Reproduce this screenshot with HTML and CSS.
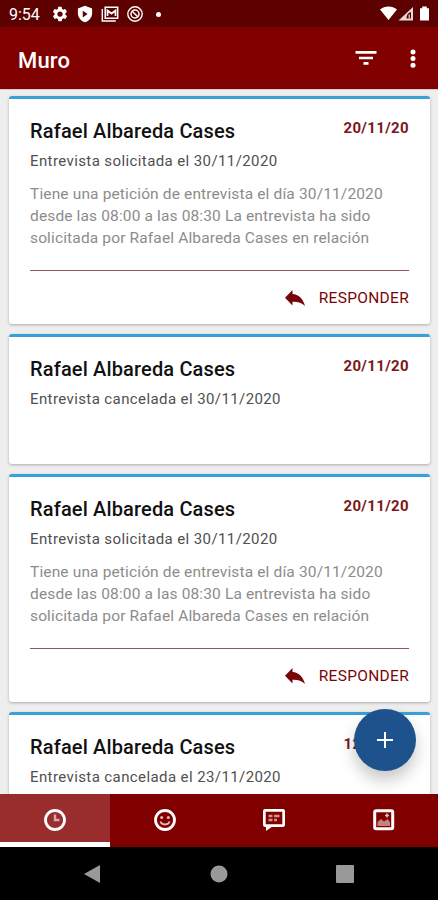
FILE: index.html
```html
<!DOCTYPE html>
<html lang="es">
<head>
  <meta charset="UTF-8" />
  <meta name="viewport" content="width=device-width, initial-scale=1.0"/>
  <title>Muro</title>
  <link rel="stylesheet" href="styles.css">
</head>
<body>
  <div class="status-bar">
    <span class="clock">9:54</span>
    <div class="status-left">
      <!-- settings -->
      <svg width="18" height="18" viewBox="0 0 24 24"><path fill="#fff" fill-rule="evenodd" d="M19.1 12.9a7 7 0 0 0 0-1.8l2-1.6c.2-.1.3-.4.1-.6l-1.900-3.300c-.1-.2-.4-.3-.6-.2l-2.400 1a7 7 0 0 0-1.600-1l-.4-2.500c0-.2-.2-.4-.5-.4h-3.800c-.3 0-.5.2-.5.4l-.4 2.500a7 7 0 0 0-1.600 1l-2.400-1c-.2-.1-.5 0-.6.2L2.700 8.900c-.1.2-.1.5.1.600l2 1.600a7 7 0 0 0 0 1.800l-2 1.600c-.2.1-.3.4-.1.600l1.900 3.300c.1.2.4.3.6.2l2.400-1c.5.4 1 .7 1.600 1l.4 2.500c0 .2.2.4.5.4h3.800c.3 0 .5-.2.5-.4l.4-2.500c.6-.3 1.100-.6 1.600-1l2.400 1c.2.1.5 0 .6-.2l1.900-3.300c.1-.2.1-.5-.1-.600zM12 15.500a3.500 3.500 0 1 1 0-7 3.500 3.500 0 0 1 0 7z"/></svg>
      <!-- shield -->
      <svg width="18" height="18" viewBox="0 0 24 24"><path fill="#fff" fill-rule="evenodd" d="M12 1 2.500 4.500V11c0 5.500 4 10.300 9.500 12 5.500-1.700 9.500-6.500 9.500-12V4.500zM9 7.500l6.500 4.500L9 16.500z"/></svg>
      <!-- mail -->
      <svg width="18" height="18" viewBox="0 0 18 18" fill="none" stroke="#fff"><path stroke-width="1.400" d="M1.300 4v12h13.500"/><path stroke-width="1.500" d="M4.200 2.300h12.500v10.900H4.200z"/><path stroke-width="1.800" d="M6.500 11V5.500l4 3 4-3V11"/></svg>
      <!-- do not disturb -->
      <svg width="18" height="18" viewBox="0 0 18 18" fill="none" stroke="#fff"><circle cx="9" cy="9" r="7.200" stroke-width="1.400"/><circle cx="9" cy="9" r="4" stroke-width="1.500"/><path stroke-width="1.500" d="m6 6 6 6"/></svg>
      <span class="dot"></span>
    </div>
    <div class="status-right">
      <svg width="50" height="16" viewBox="0 0 50 16"><path fill="#fff" d="M0 3.500C4.700-.6 12.300-.6 17 3.500L8.500 14zM49 2.300h-2.200V.5h-4.600v1.800H40v12.200h9z"/><path fill="#fff" fill-opacity=".85" d="M33 1v13.500H18.500z"/><path fill="#5c0000" d="M31 6v6.500h-4.500c0-3 1-5.500 4.500-6.500z"/><path fill="#fff" fill-opacity=".7" d="M28.500 8.500H30v4h-1.500z"/></svg>
    </div>
  </div>

  <header class="app-bar">
    <h1>Muro</h1>
    <svg class="filter" width="22" height="16" viewBox="0 0 22 16"><path fill="#fff" d="M.5 1h21v2.700H.5zM4 6.700h14v2.600H4zM8.500 12h5v2.700h-5z"/></svg>
    <svg class="more" width="6" height="20" viewBox="0 0 6 20" fill="#fff"><circle cx="3" cy="3" r="2.500"/><circle cx="3" cy="9.600" r="2.500"/><circle cx="3" cy="16.200" r="2.500"/></svg>
  </header>

  <main class="feed">
    <div class="card">
      <div class="card-head">
        <h2>Rafael Albareda Cases</h2>
        <span class="date">20/11/20</span>
      </div>
      <p class="subject">Entrevista solicitada el 30/11/2020</p>
      <p class="message">Tiene una petición de entrevista el día 30/11/2020<br>desde las 08:00 a las 08:30 La entrevista ha sido<br>solicitada por Rafael Albareda Cases en relación</p>
      <div class="card-actions">
        <svg width="20" height="16" viewBox="0 0 20 16"><path fill="#780507" d="M7.500 0v4c6 .5 10.500 4.200 12.500 12-3.500-3.500-7-4.500-12.500-4.300V15.500L0 7.700z"/></svg>
        <span class="reply">RESPONDER</span>
      </div>
    </div>

    <div class="card short">
      <div class="card-head">
        <h2>Rafael Albareda Cases</h2>
        <span class="date">20/11/20</span>
      </div>
      <p class="subject">Entrevista cancelada el 30/11/2020</p>
    </div>

    <div class="card">
      <div class="card-head">
        <h2>Rafael Albareda Cases</h2>
        <span class="date">20/11/20</span>
      </div>
      <p class="subject">Entrevista solicitada el 30/11/2020</p>
      <p class="message">Tiene una petición de entrevista el día 30/11/2020<br>desde las 08:00 a las 08:30 La entrevista ha sido<br>solicitada por Rafael Albareda Cases en relación</p>
      <div class="card-actions">
        <svg width="20" height="16" viewBox="0 0 20 16"><path fill="#780507" d="M7.500 0v4c6 .5 10.500 4.200 12.500 12-3.500-3.500-7-4.500-12.500-4.300V15.500L0 7.700z"/></svg>
        <span class="reply">RESPONDER</span>
      </div>
    </div>

    <div class="card short">
      <div class="card-head">
        <h2>Rafael Albareda Cases</h2>
        <span class="date">12/11/20</span>
      </div>
      <p class="subject">Entrevista cancelada el 23/11/2020</p>
    </div>

    <div class="fab">
      <svg width="16" height="16" viewBox="0 0 16 16"><path stroke="#fff" stroke-width="2" d="M8 0v16M0 8h16"/></svg>
    </div>
  </main>

  <nav class="tabs">
    <div class="tab active">
      <svg width="22" height="22" viewBox="0 0 22 22" fill="none"><circle cx="11" cy="11" r="9.500" stroke="#fff" stroke-width="2.800"/><path stroke="#d9a5a5" stroke-width="2.400" d="M11 5.500V11h4.500"/></svg>
    </div>
    <div class="tab">
      <svg width="22" height="22" viewBox="0 0 22 22" fill="none"><circle cx="11" cy="11" r="9.500" stroke="#fff" stroke-width="2.800"/><circle cx="7.700" cy="8.500" r="1.500" fill="#e5bcbc"/><circle cx="14.300" cy="8.500" r="1.500" fill="#e5bcbc"/><path stroke="#e5bcbc" stroke-width="1.800" d="M6.300 12.500c1.500 4 7.900 4 9.400 0"/></svg>
    </div>
    <div class="tab">
      <svg width="22" height="22" viewBox="0 0 22 22" fill="none"><path fill="#fff" d="M3 15v7l7-5z"/><rect x="1.300" y="1.300" width="19.400" height="15.400" rx="1.500" fill="#800000" stroke="#fff" stroke-width="2.800"/><path stroke="#d09090" stroke-width="2.600" d="M5.500 7h4M11 7h5.500M5.500 11h4M11 11h3"/></svg>
    </div>
    <div class="tab">
      <svg width="22" height="22" viewBox="0 0 22 22" fill="none"><rect x="1.700" y="1.700" width="18" height="18" rx="1.500" stroke="#fff" stroke-width="3"/><path fill="#c98080" d="M4.500 17v-4L8 10l3 2.500 3.500-2.500 2.500 3v4z"/><path stroke="#e5bcbc" stroke-width="1.500" d="M14 4.500v4M12 6.500h4"/></svg>
    </div>
  </nav>

  <div class="nav-bar">
    <svg width="16" height="18" viewBox="0 0 16 18"><path fill="#999" d="M16 0v18L0 9z"/></svg>
    <svg class="home" width="18" height="18" viewBox="0 0 18 18"><circle cx="9" cy="9" r="8.500" fill="#999"/></svg>
    <svg width="18" height="18" viewBox="0 0 18 18"><rect width="18" height="18" rx="1" fill="#999"/></svg>
  </div>
</body>
</html>
```
FILE: styles.css
```css
* {
  box-sizing: border-box;
}
body {
  margin: 0;
  height: 900px;
  display: flex;
  flex-direction: column;
  overflow: hidden;
  font-family: Roboto, sans-serif;
  background: #eeeeee;
}
h1, h2, p {
  margin: 0;
}
svg {
  display: block;
}
.status-bar {
  height: 27px;
  flex: none;
  display: flex;
  align-items: center;
  padding: 1px 8px 0 9px;
  background: #5c0000;
  color: #fff;
}
.clock {
  width: 42px;
  font-size: 16px;
  white-space: nowrap;
}
.status-left {
  display: flex;
  align-items: center;
  gap: 7px;
}
.dot {
  width: 5px;
  height: 5px;
  margin-left: 5px;
  border-radius: 50%;
  background: #fff;
}
.status-right {
  margin-left: auto;
}
.app-bar {
  height: 62px;
  flex: none;
  display: flex;
  align-items: center;
  padding: 0 22px 0 18px;
  background: #800000;
  color: #fff;
}
.app-bar h1 {
  flex: 1;
  font-size: 22px;
  font-weight: 500;
  letter-spacing: 0.2px;
  padding-top: 4px;
}
.filter {
  margin-right: 33px;
}
.more {
  margin-top: 1px;
}
.feed {
  position: relative;
  flex: 1;
  min-height: 0;
  overflow: hidden;
  display: flex;
  flex-direction: column;
  gap: 10px;
  padding: 6px 8px 0 9px;
  border-top: 1px solid #dcc8c8;
}
.card {
  height: 228px;
  flex: none;
  padding: 22px 21px 0;
  background: #fff;
  border-top: 3px solid #38a1d5;
  border-radius: 3px;
  box-shadow: 0 1px 3px rgba(0,0,0,0.28);
}
.card.short {
  height: 130px;
}
.card-head {
  display: flex;
  justify-content: space-between;
  height: 29px;
}
.card h2 {
  font-size: 20px;
  line-height: 20px;
  font-weight: 500;
  letter-spacing: 0.15px;
  color: #111;
}
.date {
  font-size: 15px;
  line-height: 14px;
  font-weight: 700;
  letter-spacing: 0.35px;
  color: #7c171b;
}
.subject {
  font-size: 15px;
  line-height: 22px;
  letter-spacing: 0.4px;
  color: #505050;
  white-space: nowrap;
}
.message {
  margin-top: 11px;
  font-size: 15.5px;
  line-height: 22px;
  letter-spacing: 0.14px;
  color: #8c8c8c;
  white-space: nowrap;
}
.card-actions {
  display: flex;
  justify-content: flex-end;
  align-items: center;
  gap: 14px;
  height: 55px;
  margin-top: 21px;
  border-top: 1px solid #925558;
}
.reply {
  font-size: 15.5px;
  letter-spacing: 0.3px;
  color: #780507;
}
.fab {
  position: absolute;
  right: 22px;
  bottom: 23px;
  width: 62px;
  height: 62px;
  display: flex;
  align-items: center;
  justify-content: center;
  border-radius: 50%;
  background: #1e528c;
  box-shadow: 0 9px 16px rgba(0,0,0,0.22);
}
.tabs {
  height: 53px;
  flex: none;
  display: grid;
  grid-template-columns: 110px 109px 110px 109px;
  background: #800000;
}
.tab {
  display: flex;
  align-items: center;
  justify-content: center;
  padding-bottom: 1px;
}
.tab.active {
  background: #992d2e;
  box-shadow: inset 0 -5px #fff;
}
.nav-bar {
  height: 53px;
  flex: none;
  display: flex;
  align-items: center;
  justify-content: space-between;
  padding: 0 84px;
  background: #000;
}
.home {
  margin-left: 2px;
}
```
